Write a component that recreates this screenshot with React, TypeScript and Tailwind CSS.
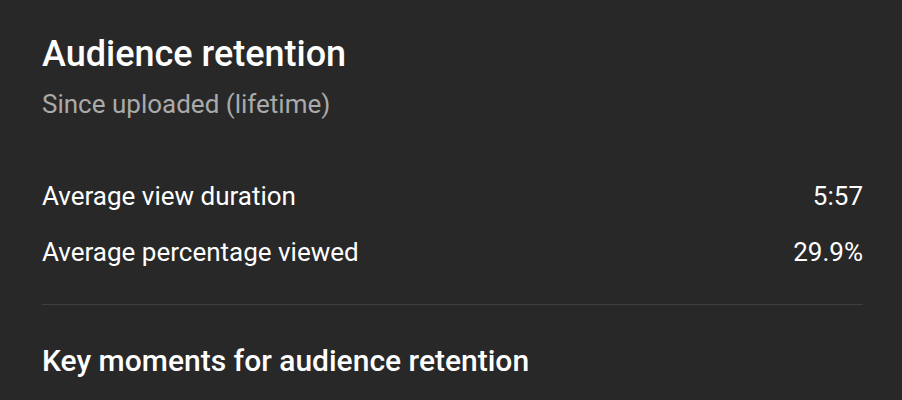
export default function App() {
  return (
    <div className="w-[902px] h-[400px] bg-[#282828] overflow-hidden pl-[42px] pr-[39px] pt-[34px]" style={{ fontFamily: "Roboto, 'Noto Sans', sans-serif" }}>
      <h1 className="text-[36px] leading-[40px] font-medium text-white">Audience retention</h1>
      <div className="text-[26px] leading-[32px] text-[#aaaaaa] mt-[14px]">Since uploaded (lifetime)</div>
      <div className="mt-[60px] flex flex-col gap-[24px]">
        <div className="flex justify-between text-[26px] leading-[32px] text-white">
          <span>Average view duration</span>
          <span>5:57</span>
        </div>
        <div className="flex justify-between text-[26px] leading-[32px] text-white">
          <span>Average percentage viewed</span>
          <span>29.9%</span>
        </div>
      </div>
      <div className="mt-[36px] h-px bg-[#3f3f3f]" />
      <div className="mt-[38px] text-[30px] leading-[36px] font-medium text-white">Key moments for audience retention</div>
    </div>
  );
}
